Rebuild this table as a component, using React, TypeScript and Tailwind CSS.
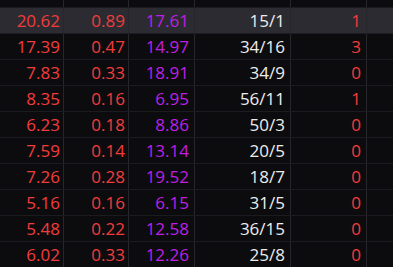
import React from 'react';

type Row = {
  avg: string;
  low: string;
  high: string;
  record: string;
  streak: string;
};

const rows: Row[] = [
  { avg: '20.62', low: '0.89', high: '17.61', record: '15/1', streak: '1' },
  { avg: '17.39', low: '0.47', high: '14.97', record: '34/16', streak: '3' },
  { avg: '7.83', low: '0.33', high: '18.91', record: '34/9', streak: '0' },
  { avg: '8.35', low: '0.16', high: '6.95', record: '56/11', streak: '1' },
  { avg: '6.23', low: '0.18', high: '8.86', record: '50/3', streak: '0' },
  { avg: '7.59', low: '0.14', high: '13.14', record: '20/5', streak: '0' },
  { avg: '7.26', low: '0.28', high: '19.52', record: '18/7', streak: '0' },
  { avg: '5.16', low: '0.16', high: '6.15', record: '31/5', streak: '0' },
  { avg: '5.48', low: '0.22', high: '12.58', record: '36/15', streak: '0' },
  { avg: '6.02', low: '0.33', high: '12.26', record: '25/8', streak: '0' },
];

const headers = ['平均赔率', '最低值', '最高', '场次/胜场', '连胜次数'];

export default function App() {
  return (
    <div
      className="h-[267px] w-[393px] overflow-hidden bg-[#0c0c0f]"
      style={{ fontFamily: '"Open Sans", "Noto Sans", "Noto Sans CJK SC", sans-serif' }}
    >
      <div className="-mt-[18px]">
        {/* Header row, scrolled mostly out of view */}
        <div className="flex h-[26px] border-b border-[#1c1c20] text-[12px] text-[#d8d8d8]">
          <div className="flex w-[64px] items-center justify-end border-r border-[#26262b] pr-[4px]">{headers[0]}</div>
          <div className="flex w-[65px] items-center justify-end border-r border-[#26262b] pr-[18px]">{headers[1]}</div>
          <div className="flex w-[66px] items-center justify-end border-r border-[#26262b] pr-[4px]">{headers[2]}</div>
          <div className="flex w-[96px] items-center justify-end border-r border-[#26262b] pr-[4px]">{headers[3]}</div>
          <div className="flex w-[76px] items-center justify-end border-r border-[#26262b] pr-[4px]">{headers[4]}</div>
          <div className="flex-1" />
        </div>

        {rows.map((r, i) => (
          <div
            key={i}
            className={`flex h-[26px] border-b border-[#1c1c20] text-[17px] leading-none ${
              i === 0 ? 'bg-[#2b2b31]' : ''
            }`}
          >
            <div className="flex w-[64px] items-center justify-end border-r border-[#26262b] pr-[3px] text-[#f23c3c]">
              {r.avg}
            </div>
            <div className="flex w-[65px] items-center justify-end border-r border-[#26262b] pr-[3px] text-[#f23c3c]">
              {r.low}
            </div>
            <div className="flex w-[66px] items-center justify-end border-r border-[#26262b] pr-[5px] text-[#bf1fe3]">
              {r.high}
            </div>
            <div className="flex w-[96px] items-center justify-end border-r border-[#26262b] pr-[5px] text-[#ececec]">
              {r.record}
            </div>
            <div className="flex w-[76px] items-center justify-end border-r border-[#26262b] pr-[5px] text-[#f23c3c]">
              {r.streak}
            </div>
            <div className="flex-1" />
          </div>
        ))}
      </div>
    </div>
  );
}
